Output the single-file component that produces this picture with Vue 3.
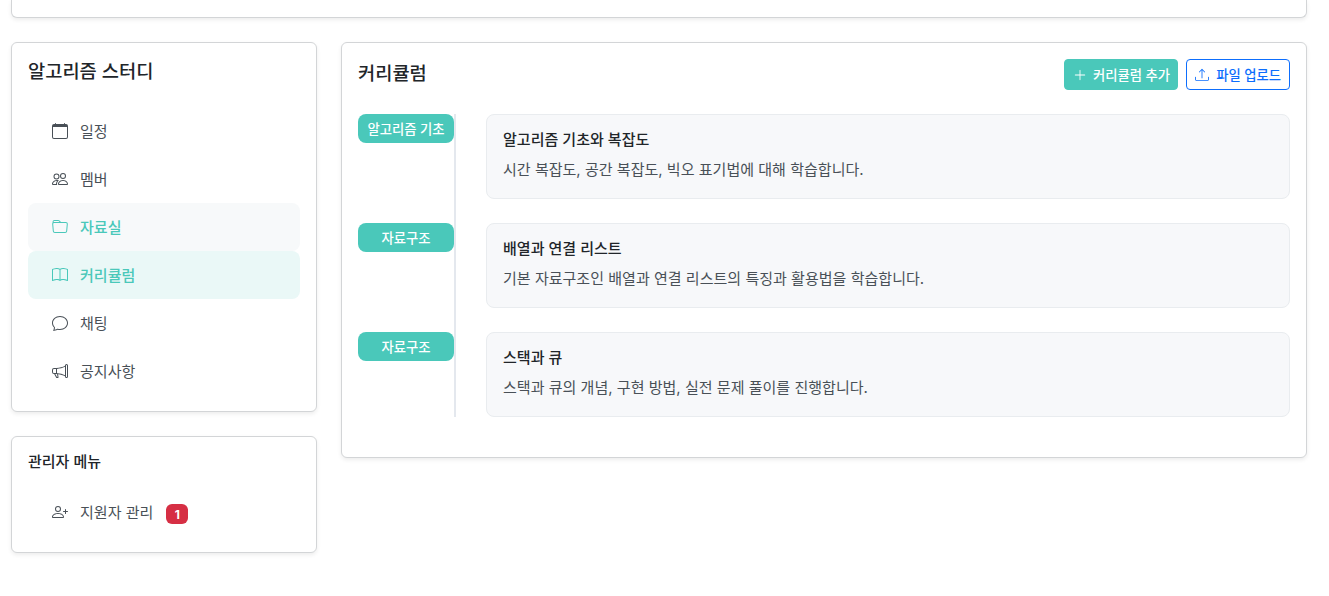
<script setup>
const menu = [
  { label: '일정', icon: 'calendar' },
  { label: '멤버', icon: 'people' },
  { label: '자료실', icon: 'folder', state: 'hover' },
  { label: '커리큘럼', icon: 'book', state: 'active' },
  { label: '채팅', icon: 'chat' },
  { label: '공지사항', icon: 'megaphone' }
]

const curriculum = [
  { tag: '알고리즘 기초', title: '알고리즘 기초와 복잡도', desc: '시간 복잡도, 공간 복잡도, 빅오 표기법에 대해 학습합니다.' },
  { tag: '자료구조', title: '배열과 연결 리스트', desc: '기본 자료구조인 배열과 연결 리스트의 특징과 활용법을 학습합니다.' },
  { tag: '자료구조', title: '스택과 큐', desc: '스택과 큐의 개념, 구현 방법, 실전 문제 풀이를 진행합니다.' }
]

const icons = {
  calendar: 'M3.5 0a.5.5 0 0 1 .5.5V1h8V.5a.5.5 0 0 1 1 0V1h1a2 2 0 0 1 2 2v11a2 2 0 0 1-2 2H2a2 2 0 0 1-2-2V3a2 2 0 0 1 2-2h1V.5a.5.5 0 0 1 .5-.5zM1 4v10a1 1 0 0 0 1 1h12a1 1 0 0 0 1-1V4H1z',
  people: 'M15 14s1 0 1-1-1-4-5-4-5 3-5 4 1 1 1 1h8Zm-7.978-1A.261.261 0 0 1 7 12.996c.001-.264.167-1.03.76-1.72C8.312 10.629 9.282 10 11 10c1.717 0 2.687.63 3.24 1.276.593.69.758 1.457.76 1.72l-.008.002a.274.274 0 0 1-.014.002H7.022ZM11 7a2 2 0 1 0 0-4 2 2 0 0 0 0 4Zm3-2a3 3 0 1 1-6 0 3 3 0 0 1 6 0ZM6.936 9.28a5.88 5.88 0 0 0-1.23-.247A7.35 7.35 0 0 0 5 9c-4 0-5 3-5 4 0 .667.333 1 1 1h4.216A2.238 2.238 0 0 1 5 13c0-1.01.377-2.042 1.09-2.904.243-.294.526-.569.846-.816ZM4.92 10A5.493 5.493 0 0 0 4 13H1c0-.26.164-1.03.76-1.724.545-.636 1.492-1.256 3.16-1.275ZM1.5 5.5a3 3 0 1 1 6 0 3 3 0 0 1-6 0Zm3-2a2 2 0 1 0 0 4 2 2 0 0 0 0-4Z',
  folder: 'M.54 3.87.5 3a2 2 0 0 1 2-2h3.672a2 2 0 0 1 1.414.586l.828.828A2 2 0 0 0 9.828 3h3.982a2 2 0 0 1 1.992 2.181l-.637 7A2 2 0 0 1 13.174 14H2.826a2 2 0 0 1-1.991-1.819l-.637-7a1.99 1.99 0 0 1 .342-1.31zM2.19 4a1 1 0 0 0-.996 1.09l.637 7a1 1 0 0 0 .995.91h10.348a1 1 0 0 0 .995-.91l.637-7A1 1 0 0 0 13.81 4H2.19zm4.69-1.707A1 1 0 0 0 6.172 2H2.5a1 1 0 0 0-1 .981l.006.139C1.72 3.042 1.95 3 2.19 3h5.396l-.707-.707z',
  book: 'M1 2.828c.885-.37 2.154-.769 3.388-.893 1.33-.134 2.458.063 3.112.752v9.746c-.935-.53-2.12-.603-3.213-.493-1.18.12-2.37.461-3.287.811V2.828zm7.5-.141c.654-.689 1.782-.886 3.112-.752 1.234.124 2.503.523 3.388.893v9.923c-.918-.35-2.107-.692-3.287-.81-1.094-.111-2.278-.039-3.213.492V2.687zM8 1.783C7.015.936 5.587.81 4.287.94c-1.514.153-3.042.672-3.994 1.105A.5.5 0 0 0 0 2.5v11a.5.5 0 0 0 .707.455c.882-.4 2.303-.881 3.68-1.02 1.409-.142 2.59.087 3.223.877a.5.5 0 0 0 .78 0c.633-.79 1.814-1.019 3.222-.877 1.378.139 2.8.62 3.681 1.02A.5.5 0 0 0 16 13.5v-11a.5.5 0 0 0-.293-.455c-.952-.433-2.48-.952-3.994-1.105C10.413.809 8.985.936 8 1.783z',
  chat: 'M2.678 11.894a1 1 0 0 1 .287.801 10.97 10.97 0 0 1-.398 2c1.395-.323 2.247-.697 2.634-.893a1 1 0 0 1 .71-.074A8.06 8.06 0 0 0 8 14c3.996 0 7-2.807 7-6 0-3.192-3.004-6-7-6S1 4.808 1 8c0 1.468.617 2.83 1.678 3.894zm-.493 3.905a21.682 21.682 0 0 1-.713.129c-.2.032-.352-.176-.273-.362a9.68 9.68 0 0 0 .244-.637l.003-.01c.248-.72.45-1.548.524-2.319C.743 11.37 0 9.76 0 8c0-3.866 3.582-7 8-7s8 3.134 8 7-3.582 7-8 7a9.06 9.06 0 0 1-2.347-.306c-.52.263-1.639.742-3.468 1.105z',
  megaphone: 'M13 2.5a1.5 1.5 0 0 1 3 0v11a1.5 1.5 0 0 1-3 0v-.214c-2.162-1.241-4.49-1.843-6.912-2.083l.405 2.712A1 1 0 0 1 5.51 15.1h-.548a1 1 0 0 1-.916-.599l-1.85-3.49a68.14 68.14 0 0 0-.202-.003A2.014 2.014 0 0 1 0 9V7a2.02 2.02 0 0 1 1.992-2.013 74.663 74.663 0 0 0 2.483-.075c3.043-.154 6.148-.849 8.525-2.199V2.5zm1 0v11a.5.5 0 0 0 1 0v-11a.5.5 0 0 0-1 0zm-1 1.35c-2.344 1.205-5.209 1.842-8 2.033v4.233c.18.01.359.022.537.036 2.568.189 5.093.744 7.463 1.993V3.85zm-9 6.215v-4.13a95.09 95.09 0 0 1-1.992.052A1.02 1.02 0 0 0 1 7v2c0 .55.448 1.002 1.006 1.009A60.49 60.49 0 0 1 4 10.065zm-.657.975 1.609 3.037.01.024h.548l-.002-.014-.443-2.966a68.019 68.019 0 0 0-1.722-.082z',
  personPlus: 'M6 8a3 3 0 1 0 0-6 3 3 0 0 0 0 6zm2-3a2 2 0 1 1-4 0 2 2 0 0 1 4 0zm4 8c0 1-1 1-1 1H1s-1 0-1-1 1-4 6-4 6 3 6 4zm-1-.004c-.001-.246-.154-.986-.832-1.664C9.516 10.68 8.289 10 6 10c-2.29 0-3.516.68-4.168 1.332-.678.678-.83 1.418-.832 1.664h10zM13.5 5a.5.5 0 0 1 .5.5V7h1.5a.5.5 0 0 1 0 1H14v1.5a.5.5 0 0 1-1 0V8h-1.5a.5.5 0 0 1 0-1H13V5.5a.5.5 0 0 1 .5-.5z',
  plus: 'M8 2a.5.5 0 0 1 .5.5v5h5a.5.5 0 0 1 0 1h-5v5a.5.5 0 0 1-1 0v-5h-5a.5.5 0 0 1 0-1h5v-5A.5.5 0 0 1 8 2z',
  upload: 'M.5 9.9a.5.5 0 0 1 .5.5v2.5a1 1 0 0 0 1 1h12a1 1 0 0 0 1-1v-2.5a.5.5 0 0 1 1 0v2.5a2 2 0 0 1-2 2H2a2 2 0 0 1-2-2v-2.5a.5.5 0 0 1 .5-.5zM7.646 1.146a.5.5 0 0 1 .708 0l3 3a.5.5 0 0 1-.708.708L8.5 2.707V11.5a.5.5 0 0 1-1 0V2.707L5.354 4.854a.5.5 0 1 1-.708-.708l3-3z'
}
</script>

<template>
  <div class="page">
    <div class="card top__card"></div>

    <div class="layout">
      <aside class="sidebar">
        <section class="card side__card">
          <h2 class="side__title">알고리즘 스터디</h2>
          <nav class="menu">
            <a v-for="item in menu" :key="item.label" class="menu__item" :class="item.state">
              <svg class="menu__icon" viewBox="0 0 16 16" fill="currentColor"><path :d="icons[item.icon]" fill-rule="evenodd" /></svg>
              <span class="menu__label">{{ item.label }}</span>
            </a>
          </nav>
        </section>

        <section class="card side__card">
          <h3 class="admin__title">관리자 메뉴</h3>
          <nav class="menu">
            <a class="menu__item">
              <svg class="menu__icon" viewBox="0 0 16 16" fill="currentColor"><path :d="icons.personPlus" fill-rule="evenodd" /></svg>
              <span class="menu__label">지원자 관리</span>
              <span class="badge">1</span>
            </a>
          </nav>
        </section>
      </aside>

      <main class="card main__card">
        <div class="main__header">
          <h2 class="main__title">커리큘럼</h2>
          <div class="main__actions">
            <button class="btn btn--teal">
              <svg class="btn__icon" viewBox="0 0 16 16" fill="currentColor"><path :d="icons.plus" /></svg>
              커리큘럼 추가
            </button>
            <button class="btn btn--outline">
              <svg class="btn__icon" viewBox="0 0 16 16" fill="currentColor"><path :d="icons.upload" /></svg>
              파일 업로드
            </button>
          </div>
        </div>

        <div class="timeline">
          <div v-for="row in curriculum" :key="row.title" class="timeline__row">
            <div class="timeline__tag">{{ row.tag }}</div>
            <div class="timeline__body">
              <div class="timeline__title">{{ row.title }}</div>
              <div class="timeline__desc">{{ row.desc }}</div>
            </div>
          </div>
        </div>
      </main>
    </div>
  </div>
</template>

<style scoped>
.page {
  width: 1296px;
  margin-left: 11px;
  padding-bottom: 43px;
  font-family: "Inter", "Noto Sans CJK KR", sans-serif;
  color: #212529;
}

.card {
  box-sizing: border-box;
  background: #fff;
  border: 1px solid #d3d5d7;
  border-radius: 6px;
  box-shadow: 0 2px 4px rgba(0, 0, 0, 0.075);
}

.top__card {
  height: 18px;
  border-top: none;
  border-radius: 0 0 6px 6px;
  margin-bottom: 24px;
}

.layout {
  display: flex;
  gap: 24px;
  align-items: flex-start;
}

.sidebar {
  width: 306px;
  flex: none;
  display: flex;
  flex-direction: column;
  gap: 24px;
}

.side__card {
  padding: 16px;
}

.side__title {
  margin: 0 0 23px;
  padding-top: 1px;
  font-size: 18.7px;
  line-height: 24px;
  font-weight: 500;
}

.admin__title {
  margin: 0 0 17px;
  font-size: 15px;
  line-height: 18px;
  font-weight: 500;
}

.menu {
  display: flex;
  flex-direction: column;
}

.menu__item {
  height: 48px;
  display: flex;
  align-items: center;
  gap: 12px;
  padding-left: 24px;
  border-radius: 8px;
  font-size: 15.04px;
  color: #495057;
}

.menu__label {
  padding-bottom: 2px;
}

.menu__item.hover {
  background: #f7f9fa;
  color: #4ac8ba;
  font-weight: 500;
}

.menu__item.active {
  background: #eaf8f7;
  color: #4ac8ba;
  font-weight: 500;
}

.menu__icon {
  width: 16px;
  height: 16px;
}

.badge {
  width: 22px;
  height: 20px;
  margin: 4px 0 0 1px;
  display: flex;
  align-items: center;
  justify-content: center;
  background: #d62f44;
  color: #fff;
  border-radius: 6px;
  font-size: 12px;
  font-weight: 700;
}

.main__card {
  flex: 1;
  padding: 16px;
}

.main__header {
  display: flex;
  justify-content: space-between;
  align-items: center;
  margin-bottom: 24px;
}

.main__title {
  margin: 0 0 2px;
  font-size: 18.7px;
  font-weight: 500;
  line-height: 28px;
}

.main__actions {
  display: flex;
  gap: 8px;
}

.btn {
  box-sizing: border-box;
  height: 31px;
  display: flex;
  align-items: center;
  gap: 7px;
  padding: 0 8px;
  border-radius: 4px;
  font-family: inherit;
  font-size: 13.33px;
  font-weight: 500;
}

.btn--teal {
  gap: 6px;
  padding: 0 7px 0 8px;
  background: #4ac8ba;
  border: 1px solid #4ac8ba;
  color: #fff;
}

.btn--outline {
  background: #fff;
  border: 1px solid #0d6efd;
  color: #0d6efd;
}

.btn__icon {
  width: 14px;
  height: 14px;
}

.timeline {
  position: relative;
  display: flex;
  flex-direction: column;
  gap: 24px;
  margin-bottom: 24px;
}

.timeline::before {
  content: "";
  position: absolute;
  left: 96px;
  top: 0;
  bottom: 0;
  width: 2px;
  background: #e4e8ee;
}

.timeline__row {
  display: grid;
  grid-template-columns: 96px 1fr;
  gap: 32px;
  align-items: start;
}

.timeline__tag {
  height: 29px;
  display: flex;
  align-items: center;
  justify-content: center;
  background: #4ac8ba;
  color: #fff;
  border-radius: 8px;
  font-size: 13.33px;
  font-weight: 500;
}

.timeline__body {
  box-sizing: border-box;
  height: 85px;
  padding: 15px 16px 16px;
  background: #f7f8fa;
  border: 1px solid #e9ecef;
  border-radius: 8px;
}

.timeline__title {
  font-size: 15.04px;
  font-weight: 500;
  line-height: 20px;
  margin-bottom: 9px;
  color: #212529;
}

.timeline__desc {
  font-size: 15.04px;
  line-height: 22px;
  color: #495057;
}
</style>
